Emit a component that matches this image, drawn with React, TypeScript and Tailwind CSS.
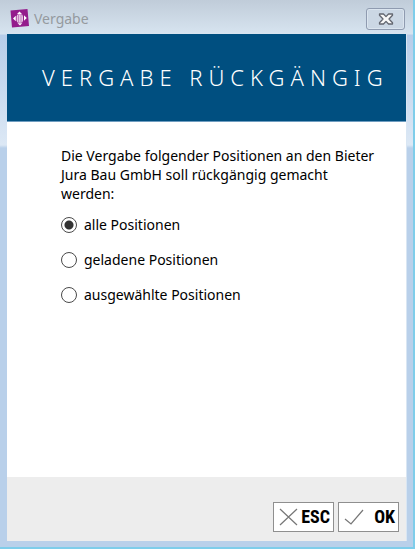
import { useState } from "react";

const OPTIONS = [
  { value: "all", label: "alle Positionen" },
  { value: "loaded", label: "geladene Positionen" },
  { value: "selected", label: "ausgewählte Positionen" },
];

function AppIcon() {
  return (
    <svg viewBox="0 0 20 20" className="h-5 w-5 shrink-0" aria-hidden="true">
      <path d="M.5 1.5 17.5 0 19 17 2 18.5Z" fill="#941c8c" />
      <path d="M9.5 2.5 12 5H7ZM10 16.5 7.5 14.2H12.3ZM3 9.5 5.8 6.8V12.2ZM16.8 9 14 6.3V11.7Z" fill="#fff" />
      <rect x="6.6" y="5.2" width="6.4" height="8.6" rx="2.2" fill="#e6c4e3" />
      <path d="M8.5 6v7M11 6v7" stroke="#b661b0" strokeWidth=".7" />
    </svg>
  );
}

function TitleBar() {
  return (
    <header className="flex h-[34px] items-start justify-between pl-[10px] pr-2">
      <div className="flex items-center gap-1 pt-[9px]">
        <AppIcon />
        <span className="text-[14px] leading-5 text-[#959a9f]">Vergabe</span>
      </div>
      <button
        type="button"
        aria-label="Schließen"
        className="mt-2 flex h-[22px] w-[39px] items-center justify-center rounded-[3px] border border-[#8f9bb0] bg-[#cbd7e4] shadow-[inset_0_0_0_1px_#dbe5ef]"
      >
        <svg viewBox="0 0 16 14" className="h-[14px] w-4" aria-hidden="true">
          <path
            d="M1.5 2H5.5L8 4.6 10.5 2H14.5V3.2L11 7 14.5 10.8V12H10.5L8 9.4 5.5 12H1.5V10.8L5 7 1.5 3.2Z"
            fill="#f8f8f8"
            stroke="#62666f"
            strokeWidth="1.3"
            strokeLinejoin="round"
          />
        </svg>
      </button>
    </header>
  );
}

export default function App() {
  const [scope, setScope] = useState("all");

  return (
    <div className="flex min-h-screen flex-col border-b-2 border-r-2 border-[#7ecdea] bg-[linear-gradient(to_bottom,#c0ccd9_0px,#d7e4f0_34px,#b7cde9_35px,#dce8f5_145px,#b9d0ea_148px)] pb-[6px] font-['Noto_Sans',sans-serif] text-black">
      <TitleBar />
      <main className="ml-[7px] mr-[6px] flex grow flex-col border-r border-[#d9e6f3] bg-white">
        <h1 className="flex h-[88px] items-center border-b border-[#6f9dc0] bg-[#004f80] pl-[35px] text-[22px] font-light tracking-[6px] whitespace-nowrap text-white">
          VERGABE RÜCKGÄNGIG
        </h1>
        <div role="radiogroup" aria-labelledby="scope-text" className="grow pl-[54px] pr-[24px] pt-6 text-[14px] leading-[19px]">
          <p id="scope-text">
            Die Vergabe folgender Positionen an den Bieter Jura Bau GmbH soll rückgängig gemacht werden:
          </p>
          <div className="mt-3 flex flex-col items-start gap-4">
            {OPTIONS.map((option) => (
              <label key={option.value} className="flex items-center gap-[7px]">
                <input
                  type="radio"
                  name="scope"
                  value={option.value}
                  checked={scope === option.value}
                  onChange={() => setScope(option.value)}
                  className="h-4 w-4 appearance-none rounded-full border border-[#4a4a4a] bg-white checked:bg-[radial-gradient(circle,#333_4px,#fff_5px)]"
                />
                {option.label}
              </label>
            ))}
          </div>
        </div>
        <footer className="flex h-16 items-end justify-end gap-1 bg-[#ededed] pb-[9px] pr-[7px] font-['Roboto_Condensed','Liberation_Sans_Narrow','Liberation_Sans',sans-serif] text-[18px] leading-5 font-bold">
          <button type="button" className="flex h-[30px] w-[61px] items-center justify-between border border-[#8f8f8f] bg-white pl-[5px] pr-[3px]">
            <svg viewBox="0 0 20 20" className="h-5 w-5 shrink-0" fill="none" stroke="#777" strokeWidth="1.2" aria-hidden="true">
              <path d="M1 2 18 18M18 2 1 18" />
            </svg>
            ESC
          </button>
          <button type="button" className="flex h-[30px] w-[61px] items-center justify-between border border-[#8f8f8f] bg-white pl-[5px] pr-[3px]">
            <svg viewBox="0 0 20 20" className="h-5 w-5 shrink-0" fill="none" stroke="#777" strokeWidth="1.2" aria-hidden="true">
              <path d="M1 12 7 17 19 3" />
            </svg>
            OK
          </button>
        </footer>
      </main>
    </div>
  );
}
